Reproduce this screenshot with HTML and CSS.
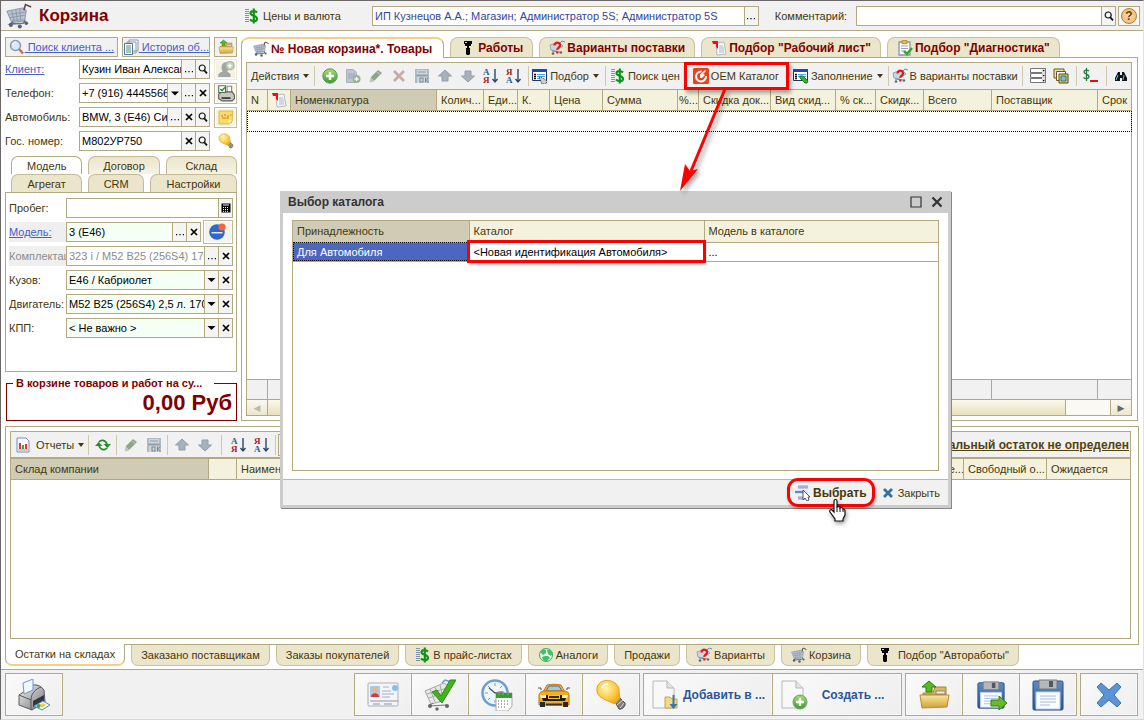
FILE: index.html
```html
<!DOCTYPE html>
<html lang="ru">
<head>
<meta charset="utf-8">
<title>Корзина</title>
<link rel="stylesheet" href="styles.css">
</head>
<body>
<svg class="sprite" aria-hidden="true">
<defs>
<linearGradient id="gGreen" x1="0" y1="0" x2="0" y2="1"><stop offset="0" stop-color="#a9dc7a"/><stop offset="1" stop-color="#3b9a2c"/></linearGradient>
<linearGradient id="gFolder" x1="0" y1="0" x2="0" y2="1"><stop offset="0" stop-color="#f8e6a0"/><stop offset="1" stop-color="#d0a136"/></linearGradient>
<linearGradient id="gBlue" x1="0" y1="0" x2="0" y2="1"><stop offset="0" stop-color="#5d8cc4"/><stop offset="1" stop-color="#2a5692"/></linearGradient>
<linearGradient id="gSteel" x1="0" y1="0" x2="1" y2="1"><stop offset="0" stop-color="#f4f4f4"/><stop offset="1" stop-color="#6d7075"/></linearGradient>
<radialGradient id="gBulb" cx=".4" cy=".35" r=".7"><stop offset="0" stop-color="#fff3b0"/><stop offset=".6" stop-color="#fccb45"/><stop offset="1" stop-color="#eda51e"/></radialGradient>
</defs>
<symbol id="cart" viewBox="0 0 32 32"><path d="M1 10l20-4 4 3-2 13-16 2z" fill="#b7c2ce" stroke="#7d8b9b"/><path d="M4 14l20-3M5 18l18-3M7 9l3 14M12 8l2 14M17 7l1 14M8 21h16" stroke="#8494a6" fill="none"/><path d="M22 9l2-7 7 3" stroke="#5e4a52" stroke-width="2" fill="none"/><path d="M9 23l-4 3 16-1 3-3" stroke="#667382" stroke-width="2" fill="none"/><circle cx="6" cy="27" r="2.500" fill="#59616c"/><circle cx="17" cy="29" r="2.500" fill="#59616c"/><circle cx="25" cy="25" r="2.200" fill="#59616c"/></symbol>
<symbol id="dollar" viewBox="0 0 16 16"><path d="M2 1v14M4 1v14" stroke="#5578a0" stroke-width="1.500" stroke-dasharray="1 1"/><path d="M13 4.500C11 2.500 6.500 2.500 6.500 5.300S13 7.500 13 10.700 8 13.500 6 11.500M9.800 .5v15" stroke="#0a9412" stroke-width="2.100" fill="none"/></symbol>
<symbol id="lens" viewBox="0 0 16 16"><path d="M10 10l4 4.500" stroke="#b87a4a" stroke-width="2.500"/><circle cx="6.500" cy="6.500" r="5" fill="#d8e8f8" stroke="#8c9bb4" stroke-width="1.500"/><path d="M4 6c0-2 1.500-3 3-3" stroke="#fff" fill="none"/></symbol>
<symbol id="docs" viewBox="0 0 16 16"><path d="M6 1h9v11H6zM4 3h9v11H4z" fill="#fff" stroke="#8797a8"/><path d="M1.500 4.500h8v11h-8z" fill="#fff" stroke="#4f76a3"/><path d="M3 7h5M3 9h5M3 11h5M3 13h5" stroke="#4d8b7f"/></symbol>
<symbol id="folderup" viewBox="0 0 32 32"><path d="M5 14h10l2-6h11v8H5z" fill="#dcb65a" stroke="#a98435"/><path d="M18 12h9v3h-9z" fill="#eee" stroke="#888"/><path d="M2 16h29l-2 12-25 1z" fill="url(#gFolder)" stroke="#b38c34"/><path d="M11 2l7 6h-4v5H8V8H4z" fill="#58b820" stroke="#2f7d10"/></symbol>
<symbol id="person" viewBox="0 0 16 16"><path d="M1 15c0-4 3-4 4-5-2-3-1-8 3-8 3 0 4 5 1 8 1 1 4 2 3 5z" fill="#a3a6a2"/><circle cx="11.500" cy="5" r="3.700" fill="#c3d0bb" stroke="#a5b19f"/><path d="M9.500 5h4M11.500 3v4" stroke="#fff" stroke-width="1.300"/></symbol>
<symbol id="print" viewBox="0 0 16 16"><path d="M9 2h4v6H9z" fill="#fff" stroke="#888"/><path d="M1.500 9l3-2h9l2 3v3l-2 2h-9l-3-2z" fill="#c9c7c1" stroke="#5e5d59"/><path d="M4 12.500h8" stroke="#333" stroke-width="1.500"/><path d="M1.500 1.500h6v6h-6z" fill="#fff" stroke="#5a705a"/><path d="M3 4.500l1.500 1.500 2.500-3" stroke="#1a8a2a" stroke-width="1.300" fill="none"/></symbol>
<symbol id="note" viewBox="0 0 16 16"><path d="M1 2h14l-1 11-3 2H1z" fill="#fbdc66" stroke="#e0b83e"/><path d="M11 15l3-4h-4z" fill="#fff0a0"/><path d="M3 7h2M6 6h2M9 7h2M12 6h1.500M4 9h7" stroke="#cf7d28" fill="none"/></symbol>
<symbol id="bulb" viewBox="0 0 32 32"><path d="M20 23l4-5 6 6c1 3-3 7-6 6z" fill="#777b80" stroke="#4b4d50"/><path d="M22 26l6-5M25 29l4-5" stroke="#ddd"/><path d="M2 9C3 3 10 0 16 2s9 7 8 11l1 6-5 6-7-3C5 19 1 15 2 9z" fill="url(#gBulb)" stroke="#e4a02b"/><path d="M7 9c1-3 3-4 6-4" stroke="#fff" stroke-width="2" fill="none"/></symbol>
<symbol id="mag" viewBox="0 0 10 10"><circle cx="4.200" cy="4" r="3" fill="none" stroke="#111" stroke-width="1.200"/><path d="M6.300 6.300L9 9.300" stroke="#111" stroke-width="1.800"/></symbol>
<symbol id="x" viewBox="0 0 10 10"><path d="M2 2l6 6M8 2L2 8" stroke="#000" stroke-width="1.700"/></symbol>
<symbol id="dots" viewBox="0 0 10 10"><path d="M1 7h1.200v1.200H1zM4.400 7h1.200v1.200H4.400zM7.800 7H9v1.200H7.800z"/></symbol>
<symbol id="tri" viewBox="0 0 10 10"><path d="M1 3.500h8L5 7.500z"/></symbol>
<symbol id="calc" viewBox="0 0 10 10"><path d="M.5.5h9v9h-9z"/><path d="M2 2h6" stroke="#fff"/><path d="M2 4.500h6M2 6.500h6M2 8.300h6" stroke="#fff" stroke-dasharray="1 1"/></symbol>
<symbol id="globe" viewBox="0 0 18 18"><circle cx="8" cy="9" r="7.800" fill="#2f68c9"/><path d="M2.500 9h11v1.500h-11z" fill="#dce7fa"/><circle cx="13" cy="4" r="3.600" fill="#fb6238"/></symbol>
<symbol id="worklist" viewBox="0 0 16 16"><path d="M5 3l8-1 2 12-9 1z" fill="#f5f6f9" stroke="#b5bac5"/><path d="M8 6h4M8 8h5M8 10h5M8 12h5" stroke="#b0b6c4"/><path d="M1 1h6v8L5 7V4H2z" fill="#e0141c"/></symbol>
<symbol id="tool" viewBox="0 0 16 16"><path d="M4 1h8v3h-1v2H9v2h1v6l-1 1H7l-1-1V8h1V6H5V4H4z"/><path d="M5 2.500h2" stroke="#fff" stroke-width=".8"/></symbol>
<symbol id="cartq" viewBox="0 0 16 16"><path d="M1 5l9-3 4 4-8 5-4-1z" fill="#cdd5de" stroke="#96a4b4"/><path d="M11 3l2-2 3 1M3 11l8 1" stroke="#6c8bb0" fill="none"/><circle cx="4" cy="13.500" r="1.300" fill="#666"/><circle cx="12" cy="12.500" r="1.200" fill="#666"/><path d="M5.500 5.500c0-4 6-3.500 5.500 .3-.4 2-2.700 1.800-2.700 4M8.300 11.500v2" stroke="#e3171b" stroke-width="2.200" fill="none"/></symbol>
<symbol id="clip" viewBox="0 0 16 16"><path d="M2 2h11v13H2z" fill="#fff" stroke="#8794a6" stroke-width="1.300"/><path d="M5 .7h5v3H5z" fill="#e5c563" stroke="#a98a35"/><path d="M4 6h7M4 8.500h7M4 11h3" stroke="#98a5b8"/><path d="M7 11l3 3 5-6" stroke="#38a52e" stroke-width="2.500" fill="none"/></symbol>
<symbol id="plus" viewBox="0 0 16 16"><circle cx="8" cy="8" r="7.200" fill="url(#gGreen)" stroke="#5a9948"/><path d="M4 8h8M8 4v8" stroke="#fff" stroke-width="2.400"/></symbol>
<symbol id="docplus" viewBox="0 0 16 16"><path d="M1.500 1.500h7l3 3v10h-10z" fill="#bcc6cf" stroke="#a6b1ba"/><path d="M3 6h7M3 8h7M3 10h4" stroke="#9aa7b2"/><circle cx="11.500" cy="11" r="4" fill="#94b58f"/><path d="M9.500 11h4M11.500 9v4" stroke="#fff" stroke-width="1.300"/></symbol>
<symbol id="pencil" viewBox="0 0 16 16"><path d="M2 14l1-5 7-7 4 3-8 8z" fill="#8fa58b"/><path d="M2 14l1-4 3 3zM9 4l4 3" fill="#b9c2b6" stroke="#c3cec0"/></symbol>
<symbol id="xgray" viewBox="0 0 16 16"><path d="M3 3l10 10M13 3L3 13" stroke="#c5aaa5" stroke-width="2.600"/></symbol>
<symbol id="saveok" viewBox="0 0 16 16"><path d="M1 1h14v14H1z" fill="#aebac4"/><path d="M3 2h10v4H3zM3 9h10v6H3z" fill="#cdd5db"/><path d="M4 4h8M2 7.500h12" stroke="#8f9eab"/><rect x="6" y="10" width="3" height="4" fill="none" stroke="#7b8995"/><path d="M11.500 9.500v5M14.500 9.500l-3 2.500 3 2.500" stroke="#7b8995" fill="none"/></symbol>
<symbol id="up" viewBox="0 0 16 16"><path d="M8 2l6.500 6H11v5H5V8H1.500z" fill="#a6b1ba" stroke="#919faa"/></symbol>
<symbol id="down" viewBox="0 0 16 16"><path d="M8 14L1.500 8H5V3h6v5h3.500z" fill="#a6b1ba" stroke="#919faa"/></symbol>
<symbol id="pick" viewBox="0 0 16 16"><path d="M.5 1.500h14v11H.5z" fill="#fff" stroke="#24335e"/><path d="M0 1h15v3H0z" fill="#2048b0"/><path d="M2 6.500h2M2 8.500h2M2 10.500h2" stroke="#111" stroke-width="1.300"/><path d="M5 6.500h8M5 8.500h8M5 10.500h5" stroke="#4fa3e0"/><path d="M7 9l4 1 4 3-1 3h-4z" fill="#ccc" stroke="#222" stroke-dasharray="1 1"/></symbol>
<symbol id="fill" viewBox="0 0 16 16"><path d="M.5 1.500h14v11H.5z" fill="#fff" stroke="#24335e"/><path d="M0 1h15v3H0z" fill="#2048b0"/><path d="M2 6.500h2M2 8.500h2M2 10.500h2" stroke="#111" stroke-width="1.300"/><path d="M5 6.500h8M5 8.500h8" stroke="#4fa3e0"/><path d="M7 8l3 0 5 5-1 2-2 0-5-5z" fill="#38b536" stroke="#1b7b1a"/></symbol>
<symbol id="oem" viewBox="0 0 16 16"><rect width="16" height="16" rx="1.500" fill="#e8431b"/><path d="M8.500 3.500A5 5 0 1 0 13 8" stroke="#fff" stroke-width="2" fill="none"/><path d="M7 10V6.500L12 2l1 1-3 3 2 1-3 3z" fill="#fff"/></symbol>
<symbol id="rows" viewBox="0 0 16 16"><path d="M.5.5h15v4H.5zM.5 5.500h15v4H.5zM.5 10.500h15v4H.5z" fill="#fff" stroke="#777"/><path d="M12 .5h3.500v14H12" fill="#ddd" stroke="#777"/><path d="M12.700 2h2l-1 1.500zM12.700 7h2l-1 1.500zM12.700 12h2l-1 1.500z"/></symbol>
<symbol id="layers" viewBox="0 0 16 16"><path d="M1 1h10v9H1z" fill="#efe1a1" stroke="#6b5720"/><path d="M3.500 3.500h9v9h-9z" fill="#fff" stroke="#6b5720"/><path d="M6 6h9v9H6z" fill="#edd166" stroke="#54451c"/><path d="M8 8h5v5H8z" fill="#7ac2d8" stroke="#376"/></symbol>
<symbol id="dolmin" viewBox="0 0 16 16"><path d="M6 3C4.500 1.500 1 1.700 1 4s5 2 5 4.500S2 11 .5 9.500M3.500 0v13" stroke="#207b3c" stroke-width="1.300" fill="none"/><path d="M7 13h8" stroke="#f00808" stroke-width="2"/></symbol>
<symbol id="binoc" viewBox="0 0 16 16"><path d="M5 4h2v3h2V4h2l3 6v3H9v-3H7v3H2v-3z" fill="#10151c"/><path d="M3 12l2-5M10 12l1-5" stroke="#3ecadd"/></symbol>
<symbol id="chart" viewBox="0 0 16 16"><path d="M2 1h9l3 3v11H2z" fill="#f4f8fc" stroke="#7592b2"/><path d="M5 6v6" stroke="#d83a2d" stroke-width="2"/><path d="M8 8v4" stroke="#40a23d" stroke-width="2"/><path d="M11 7v5" stroke="#d83a2d" stroke-width="2"/><path d="M3.500 13h9" stroke="#999"/></symbol>
<symbol id="refresh" viewBox="0 0 16 16"><path d="M4 5c2-2.500 6-2.500 8 2M12 11c-2 2.500-6 2.500-8-2" fill="none" stroke="#2c8a2c" stroke-width="1.800"/><path d="M8.500 7H16l-3.700 4zM7.500 9H0l3.700-4z" fill="#2c8a2c"/></symbol>
<symbol id="recycle" viewBox="0 0 16 16"><circle cx="8" cy="8" r="6.500" fill="#eaf8e9" stroke="#35ad57"/><path d="M2 5l3-3 3 1v3L5 8zM9 3l3-1 3 4-2 3-3-2zM4 10l3-1h3l2 2-4 4-3-2z" fill="#43bf67"/></symbol>
<symbol id="bigprinter" viewBox="0 0 32 32"><path d="M1 16L7 12c5-8 14-8 19-1l1 12-13 8L1 26z" fill="url(#gSteel)" stroke="#5b5c5f"/><path d="M5 4l10-4v11L6 15z" fill="#eef6ff" stroke="#6f98cc"/><path d="M1 16l12 5v10M13 21c0-7 5-11 10-13" fill="none" stroke="#55575b"/><path d="M15 22l11-6v6l-11 6z" fill="#33363b"/><path d="M16 27l9-5 7 4-8 5z" fill="#f5f9ff" stroke="#5c86c7"/><path d="M21 26l4-2 3 2-4 3z" fill="#ecd42a"/><circle cx="20.500" cy="27" r="2" fill="#2fa45d"/></symbol>
<symbol id="card" viewBox="0 0 32 26"><rect x="1" y="1" width="30" height="23" rx="1" fill="#f3f5f9" stroke="#a9b0b9"/><path d="M3 4h10v11H3z" fill="#a8cbea"/><circle cx="8" cy="8" r="2.800" fill="#e7b58f"/><path d="M4 15c0-5 8-5 8 0z" fill="#d43c35"/><path d="M16 5h6M15 9h9M15 12h12M15 15h8" stroke="#9db1cc"/><circle cx="28" cy="6" r="3" fill="#8ebbe9"/><path d="M3 19h28M6 22h7M17 22h8" stroke="#8d949f"/></symbol>
<symbol id="cartcheck" viewBox="0 0 32 32"><path d="M1 12l19-8 4 3-5 15-12 3z" fill="#e8e8e8" stroke="#a6a6a6"/><path d="M3 15l20-6M5 19l16-6M6 10l5 13M11 8l5 15M16 6l3 13" stroke="#aaa"/><path d="M18 4l3-3 6 2" stroke="#6699ce" stroke-width="1.500" fill="none"/><path d="M9 24l-4 3 17-1" stroke="#777" fill="none"/><circle cx="6" cy="27" r="2" fill="#666"/><circle cx="13" cy="30" r="1.700" fill="#666"/><circle cx="23" cy="27" r="2" fill="#666"/><path d="M8 13l5-2 4 6L26 1h6L18 24z" fill="#43b41e" stroke="#2b8f10"/></symbol>
<symbol id="clock" viewBox="0 0 32 32"><circle cx="14" cy="14" r="12.500" fill="#eef6fd" stroke="#6a9fd6" stroke-width="2.500"/><path d="M14 4v3M14 21v3M4 14h3M21 14h3M7 7l2 2M21 7l-2 2M7 21l2-2" stroke="#8296ad"/><path d="M8 9l6 5 8-1" stroke="#555" fill="none" stroke-width="1.300"/><path d="M15 14h16v13l-4 5H15z" fill="#fdfdfd" stroke="#aaa"/><path d="M15 14h16v5H15z" fill="#2aa523"/><path d="M18 12v4M22 12v4M27 12v4" stroke="#999"/><path d="M17 22h12M17 25h12M17 28h9" stroke="#666" stroke-dasharray="1 2"/></symbol>
<symbol id="car" viewBox="0 0 32 26"><path d="M5 10L9 3c4-1 10-1 14 0l4 7z" fill="#f8b132" stroke="#b77d24"/><path d="M8 9l3-5h10l3 5z" fill="#a8c7d7" stroke="#5c6d75"/><path d="M1 14c0-4 3-5 6-5h18c4 0 6 1 6 5v9H1z" fill="#f7aa22" stroke="#b77322"/><path d="M3 13h26l-2 6H5z" fill="#1e1c1c"/><path d="M2 13h6v3H3zM24 13h6l-1 3h-5z" fill="#fff2b5"/><path d="M10 13h12v4H10z" fill="#f7c22a"/><path d="M11 15h10" stroke="#333" stroke-width="2"/><path d="M2 20h5v5H2zM25 20h5v5h-5z" fill="#2a2929"/><path d="M8 22.500h16" stroke="#333" stroke-width="2"/><path d="M0 6h3v2M32 6h-3v2" stroke="#555" fill="none"/></symbol>
<symbol id="docdown" viewBox="0 0 28 30"><path d="M1 1h14l7 7v20H1z" fill="#f8f8f9" stroke="#b7b7bb"/><path d="M15 1v7h7" fill="#e4e4e6" stroke="#b7b7bb"/><path d="M13 17h5l2 2h5v9H13z" fill="#f2d88a" stroke="#c8a34a"/><path d="M20.500 15h2v9h3l-4 5-4-5h3z" fill="#3478ad"/></symbol>
<symbol id="docadd" viewBox="0 0 28 30"><path d="M1 1h14l7 7v20H1z" fill="#f8f8f9" stroke="#b7b7bb"/><path d="M15 1v7h7" fill="#e4e4e6" stroke="#b7b7bb"/><circle cx="19" cy="22" r="7" fill="url(#gGreen)" stroke="#6f9e65"/><path d="M15 22h8M19 18v8" stroke="#fff" stroke-width="2.400"/></symbol>
<symbol id="floppy" viewBox="0 0 32 32"><rect x="1" y="2" width="30" height="29" rx="1.500" fill="url(#gBlue)" stroke="#264c80"/><path d="M7 1h18v9H7z" fill="#b5b7ba" stroke="#77797e"/><path d="M17 2h4v6h-4z" fill="#53565b"/><path d="M4 13h24v17H4z" fill="#f8fbff" stroke="#bfd1e8"/><path d="M8 17h16M8 20h16M8 23h16M8 26h10" stroke="#a8c0df"/></symbol>
<symbol id="arrowr" viewBox="0 0 18 16"><path d="M1 5h8V1l8 7-8 7v-4H1z" fill="#69b928" stroke="#397b10"/></symbol>
<symbol id="xblue" viewBox="0 0 26 26"><path d="M5 1l8 7 8-7 4 4-7 8 7 8-4 4-8-7-8 7-4-4 7-8-7-8z" fill="#5b93d8" stroke="#3f73b4" stroke-linejoin="round"/></symbol>
<symbol id="choose" viewBox="0 0 16 16"><path d="M3 0h10v4H3zM3 11h8v4H3z" fill="#c6c6ec"/><path d="M3 2h10M3 13h8" stroke="#8e8ed0"/><path d="M0 5h13v4H0z" fill="#d4e5f6"/><path d="M0 7h9" stroke="#316ea6" stroke-width="1.500"/><path d="M8 5v10l2-2 2 3 2-1-1-3h2z" fill="#fff" stroke="#333" stroke-width=".8"/></symbol>
<symbol id="xteal" viewBox="0 0 12 12"><path d="M2 2l8 8M10 2l-8 8" stroke="#36719b" stroke-width="2.800"/></symbol>
<symbol id="hand" viewBox="0 0 18 24"><path d="M6 14V3c0-2 3-2 3 0v6c3-1 3 0 3 1 2-1 3 0 3 1 2 0 2 1 2 2v4l-2 4v2H7v-2l-5-7c-1-2 1-3 2-2z" fill="#fff" stroke="#111" stroke-width="1.200"/><path d="M9 9v5M12 10v4M15 11v3" stroke="#111"/></symbol>
<symbol id="max" viewBox="0 0 12 12"><path d="M1 1h10v10H1z" fill="none" stroke="#333" stroke-width="1.200"/></symbol>
<symbol id="close" viewBox="0 0 12 12"><path d="M1.500 1.500l9 9M10.500 1.500l-9 9" stroke="#333" stroke-width="2.200"/></symbol>
</svg>

<div class="app">
  <header class="titlebar">
    <svg class="i26"><use href="#cart"/></svg>
    <h1>Корзина</h1>
    <button class="flat prices"><svg class="i16"><use href="#dollar"/></svg>Цены и валюта</button>
    <div class="field company"><input type="text" aria-label="Организация" value="ИП Кузнецов А.А.; Магазин; Администратор 5S; Администратор 5S"><button aria-label="Выбрать"><svg><use href="#dots"/></svg></button></div>
    <label for="comment">Комментарий:</label>
    <div class="field comment"><input type="text" id="comment"><button aria-label="Открыть"><svg><use href="#mag"/></svg></button></div>
    <button class="help" aria-label="Справка"><span>?</span></button>
  </header>

  <main class="work">
    <aside class="side">
      <div class="find">
        <button class="box"><svg class="i16"><use href="#lens"/></svg><u>&nbsp;Поиск клиента ...</u></button>
        <button class="box"><svg class="i16"><use href="#docs"/></svg><u>&nbsp;История об...</u></button>
        <button class="box icon" aria-label="Папка"><svg class="i16"><use href="#folderup"/></svg></button>
      </div>
      <div class="client">
        <label for="f1"><a href="#">Клиент:</a></label>
        <div class="field"><input id="f1" type="text" value="Кузин Иван Александрович"><button aria-label="Выбрать"><svg><use href="#dots"/></svg></button><button aria-label="Открыть"><svg><use href="#mag"/></svg></button></div>
        <button class="tile off" aria-label="Новый клиент"><svg class="i18"><use href="#person"/></svg></button>
        <label for="f2">Телефон:</label>
        <div class="field"><input id="f2" type="text" value="+7 (916) 4445566"><button aria-label="Список"><svg><use href="#tri"/></svg></button><button aria-label="Выбрать"><svg><use href="#dots"/></svg></button><button aria-label="Очистить"><svg><use href="#x"/></svg></button></div>
        <button class="tile" aria-label="Печать"><svg class="i18"><use href="#print"/></svg></button>
        <label for="f3">Автомобиль:</label>
        <div class="field"><input id="f3" type="text" value="BMW, 3 (E46) Синий"><button aria-label="Выбрать"><svg><use href="#dots"/></svg></button><button aria-label="Очистить"><svg><use href="#x"/></svg></button><button aria-label="Открыть"><svg><use href="#mag"/></svg></button></div>
        <button class="tile" aria-label="Заметка"><svg class="i16"><use href="#note"/></svg></button>
        <label for="f4">Гос. номер:</label>
        <div class="field"><input id="f4" type="text" value="М802УР750"><button aria-label="Очистить"><svg><use href="#x"/></svg></button><button aria-label="Открыть"><svg><use href="#mag"/></svg></button></div>
        <button class="flat tip" aria-label="Подсказка"><svg class="i16"><use href="#bulb"/></svg></button>
      </div>
      <nav class="minitabs">
        <div><button class="on">Модель</button><button>Договор</button><button>Склад</button></div>
        <div><button>Агрегат</button><button class="short">CRM</button><button class="long">Настройки</button></div>
      </nav>
      <section class="model">
        <label for="m1">Пробег:</label>
        <div class="field"><input id="m1" type="text"><button aria-label="Калькулятор"><svg><use href="#calc"/></svg></button></div>
        <label for="m2" class="shade"><a href="#">Модель:</a></label>
        <div class="pair"><div class="field mint"><input id="m2" type="text" value="3 (E46)"><button aria-label="Выбрать"><svg><use href="#dots"/></svg></button><button aria-label="Очистить"><svg><use href="#x"/></svg></button></div><button class="tile wide" aria-label="Каталог"><svg class="i18"><use href="#globe"/></svg></button></div>
        <label for="m3" class="shade dim">Комплектация:</label>
        <div class="field dim"><input id="m3" type="text" value="323 i / M52 B25 (256S4) 170 л.с."><button aria-label="Выбрать"><svg><use href="#dots"/></svg></button><button aria-label="Очистить"><svg><use href="#x"/></svg></button></div>
        <label for="m4">Кузов:</label>
        <div class="field mint"><select id="m4"><option>E46 / Кабриолет</option></select><button aria-label="Очистить"><svg><use href="#x"/></svg></button></div>
        <label for="m5">Двигатель:</label>
        <div class="field mint"><select id="m5"><option>M52 B25 (256S4) 2,5 л. 170 л.с.</option></select><button aria-label="Очистить"><svg><use href="#x"/></svg></button></div>
        <label for="m6">КПП:</label>
        <div class="field mint"><select id="m6"><option>&lt; Не важно &gt;</option></select><button aria-label="Очистить"><svg><use href="#x"/></svg></button></div>
      </section>
      <fieldset class="total"><legend>В корзине товаров и работ на су...</legend><output>0,00 Руб</output></fieldset>
    </aside>

    <section class="right">
      <nav class="tabs">
        <button class="on"><svg class="i16"><use href="#cart"/></svg>№ Новая корзина*. Товары</button>
        <button><svg class="i16"><use href="#tool"/></svg>Работы</button>
        <button><svg class="i16"><use href="#cartq"/></svg>Варианты поставки</button>
        <button><svg class="i16"><use href="#worklist"/></svg>Подбор "Рабочий лист"</button>
        <button><svg class="i16"><use href="#clip"/></svg>Подбор "Диагностика"</button>
      </nav>
      <div class="frame">
        <div class="toolbar">
          <button>Действия<i class="caret"></i></button><hr>
          <button class="ic" aria-label="Добавить"><svg class="i16"><use href="#plus"/></svg></button>
          <button class="ic" aria-label="Копировать"><svg class="i16"><use href="#docplus"/></svg></button>
          <button class="ic" aria-label="Изменить"><svg class="i16"><use href="#pencil"/></svg></button>
          <button class="ic" aria-label="Удалить"><svg class="i16"><use href="#xgray"/></svg></button>
          <button class="ic" aria-label="Записать"><svg class="i16"><use href="#saveok"/></svg></button>
          <button class="ic" aria-label="Вверх"><svg class="i16"><use href="#up"/></svg></button>
          <button class="ic" aria-label="Вниз"><svg class="i16"><use href="#down"/></svg></button>
          <button class="ic" aria-label="По возрастанию"><svg class="i16 sort" viewBox="0 0 16 16"><text x="0" y="7" class="blue">А</text><text x="0" y="15" class="red">Я</text><path d="M12 1v12M9.500 11l2.500 3 2.500-3"/></svg></button>
          <button class="ic" aria-label="По убыванию"><svg class="i16 sort" viewBox="0 0 16 16"><text x="0" y="7" class="red">Я</text><text x="0" y="15" class="blue">А</text><path d="M12 1v12M9.500 11l2.500 3 2.500-3"/></svg></button><hr>
          <button><svg class="i16"><use href="#pick"/></svg>Подбор<i class="caret"></i></button><hr class="w">
          <button><svg class="i16"><use href="#dollar"/></svg>Поиск цен</button>
          <button class="marked"><svg class="i16"><use href="#oem"/></svg>OEM Каталог</button>
          <button><svg class="i16"><use href="#fill"/></svg>Заполнение<i class="caret"></i></button><hr>
          <button><svg class="i16"><use href="#cartq"/></svg>В варианты поставки</button><hr class="w">
          <button class="ic" aria-label="Строки"><svg class="i16"><use href="#rows"/></svg></button>
          <button class="ic" aria-label="Слои"><svg class="i16"><use href="#layers"/></svg></button><hr>
          <button class="ic" aria-label="Скидка"><svg class="i16"><use href="#dolmin"/></svg></button><hr>
          <button class="ic" aria-label="Найти"><svg class="i16"><use href="#binoc"/></svg></button>
        </div>
        <div class="grid">
          <table class="goods">
            <colgroup><col class="c21"><col class="c23"><col><col class="c47"><col class="c34"><col class="c32"><col class="c53"><col class="c75"><col class="c21"><col class="c72"><col class="c65"><col class="c40"><col class="c48"><col class="c68"><col class="c106"><col class="c34"></colgroup>
            <thead><tr><th>N</th><th><svg class="i16"><use href="#worklist"/></svg></th><th class="on">Номенклатура</th><th>Колич...</th><th>Еди...</th><th>К.</th><th>Цена</th><th>Сумма</th><th class="tight">%...</th><th>Скидка док...</th><th>Вид скид...</th><th>% ск...</th><th>Скидк...</th><th>Всего</th><th>Поставщик</th><th>Срок</th></tr></thead>
            <tbody><tr class="cur"><td colspan="16"></td></tr><tr><td colspan="16"></td></tr></tbody>
            <tfoot><tr><td></td><td></td><td></td><td></td><td></td><td></td><td></td><td></td><td></td><td></td><td></td><td></td><td></td><td></td><td></td><td></td></tr></tfoot>
          </table>
        </div>
        <div class="scroll"><button aria-label="Влево">◀</button><span class="thumb"></span><span class="track"></span><button class="r" aria-label="Вправо">▶</button></div>
      </div>
    </section>
  </main>

  <section class="lower">
    <div class="frame">
      <div class="toolbar">
        <button><svg class="i16"><use href="#chart"/></svg>&nbsp;Отчеты<i class="caret"></i></button><hr>
        <button class="ic" aria-label="Обновить"><svg class="i16"><use href="#refresh"/></svg></button><hr>
        <button class="ic" aria-label="Изменить"><svg class="i16"><use href="#pencil"/></svg></button>
        <button class="ic" aria-label="Записать"><svg class="i16"><use href="#saveok"/></svg></button><hr>
        <button class="ic" aria-label="Вверх"><svg class="i16"><use href="#up"/></svg></button>
        <button class="ic" aria-label="Вниз"><svg class="i16"><use href="#down"/></svg></button><hr class="w">
        <button class="ic" aria-label="По возрастанию"><svg class="i16 sort" viewBox="0 0 16 16"><text x="0" y="7" class="blue">А</text><text x="0" y="15" class="red">Я</text><path d="M12 1v12M9.500 11l2.500 3 2.500-3"/></svg></button>
        <button class="ic" aria-label="По убыванию"><svg class="i16 sort" viewBox="0 0 16 16"><text x="0" y="7" class="red">Я</text><text x="0" y="15" class="blue">А</text><path d="M12 1v12M9.500 11l2.500 3 2.500-3"/></svg></button><hr>
        <button class="ic framed" aria-label="Отбор"><svg class="i16"><use href="#rows"/></svg></button>
        <a href="#" class="rest">Минимальный остаток не определен</a>
      </div>
      <table class="stock">
        <colgroup><col class="c198"><col class="c28"><col><col class="c34"><col class="c83"><col class="c84"></colgroup>
        <thead><tr><th class="on">Склад компании</th><th></th><th>Наименование</th><th class="tight">Резе...</th><th>Свободный о...</th><th>Ожидается</th></tr></thead>
        <tbody></tbody>
      </table>
    </div>
    <nav class="btabs">
      <button class="on">Остатки на складах</button>
      <button>Заказано поставщикам</button>
      <button>Заказы покупателей</button>
      <button><svg class="i16"><use href="#dollar"/></svg>В прайс-листах</button>
      <button><svg class="i16"><use href="#recycle"/></svg>Аналоги</button>
      <button>Продажи</button>
      <button><svg class="i16"><use href="#cartq"/></svg>Варианты</button>
      <button><svg class="i16"><use href="#cart"/></svg>Корзина</button>
      <button><svg class="i16"><use href="#tool"/></svg>&nbsp;Подбор "Автоработы"</button>
    </nav>
  </section>

  <footer class="actions">
    <div class="group"><button aria-label="Печать"><svg class="i32"><use href="#bigprinter"/></svg></button></div>
    <div class="group push">
      <button aria-label="Карточка"><svg class="i32"><use href="#card"/></svg></button>
      <button aria-label="Оформить"><svg class="i32"><use href="#cartcheck"/></svg></button>
      <button aria-label="Запись"><svg class="i32"><use href="#clock"/></svg></button>
      <button aria-label="Автомобиль"><svg class="i32"><use href="#car"/></svg></button>
      <button aria-label="Подсказка"><svg class="i32"><use href="#bulb"/></svg></button>
    </div>
    <div class="group words">
      <button><svg class="i28"><use href="#docdown"/></svg><b>Добавить в ...</b></button>
      <button><svg class="i28"><use href="#docadd"/></svg><b>Создать ...</b></button>
    </div>
    <div class="group">
      <button aria-label="Открыть"><svg class="i32"><use href="#folderup"/></svg></button>
      <button class="go" aria-label="Записать и закрыть"><svg class="i28"><use href="#floppy"/></svg><svg class="arr"><use href="#arrowr"/></svg></button>
      <button aria-label="Записать"><svg class="i32"><use href="#floppy"/></svg></button>
    </div>
    <div class="group"><button aria-label="Закрыть"><svg class="i26"><use href="#xblue"/></svg></button></div>
  </footer>

  <div class="dialog" role="dialog" aria-labelledby="dlg">
    <div class="cap"><h2 id="dlg">Выбор каталога</h2><button aria-label="Развернуть"><svg><use href="#max"/></svg></button><button aria-label="Закрыть окно"><svg><use href="#close"/></svg></button></div>
    <div class="body">
      <table class="cat">
        <colgroup><col class="c176"><col class="c235"><col></colgroup>
        <thead><tr><th class="on">Принадлежность</th><th>Каталог</th><th>Модель в каталоге</th></tr></thead>
        <tbody><tr><td class="sel">Для Автомобиля</td><td class="hot">&lt;Новая идентификация Автомобиля&gt;</td><td>...</td></tr></tbody>
      </table>
    </div>
    <div class="foot">
      <button class="choose"><svg class="i16"><use href="#choose"/></svg><b>Выбрать</b></button>
      <button class="cancel"><svg class="i12"><use href="#xteal"/></svg>Закрыть</button>
      <svg class="hand"><use href="#hand"/></svg>
    </div>
  </div>

  <svg class="pointer" viewBox="0 0 50 106"><path d="M46 0L12 82" stroke="#f00" stroke-width="3"/><path d="M1 102L6 75l5 7 8-2z" fill="#f00"/></svg>
</div>
</body>
</html>
```
FILE: styles.css
```css
* { box-sizing: border-box; }
:root {
  --line: #b3a980;
  --ink: #45380c;
  --wine: #800000;
  --panel: #f1f1f1;
  --head: #f4f1dc;
  --headon: #cfcbb4;
  --tab: #ebe5cc;
  --link: #4560c8;
}
body { margin: 0; background: #fff; color: var(--ink); font: 11px/14px "Liberation Sans", Arial, sans-serif; }
button, input, select { font: inherit; color: inherit; margin: 0; padding: 0; border: 0; background: none; border-radius: 0; }
button { display: inline-flex; align-items: center; justify-content: center; white-space: nowrap; }
input, select { outline: 0; min-width: 0; }
a { color: inherit; }
h1, h2 { margin: 0; }
svg { display: block; flex: none; }
.sprite { position: absolute; width: 0; height: 0; }
.sort { font: bold 9px "Liberation Serif", serif; overflow: visible; }
.sort path { stroke: #27496d; stroke-width: 1.4; fill: none; }
.blue { fill: #27608f; }
.red { fill: #a81e25; }
.i12 { width: 12px; height: 12px; }
.i16 { width: 16px; height: 16px; }
.i18 { width: 18px; height: 18px; }
.i26 { width: 26px; height: 26px; }
.i28 { width: 28px; height: 30px; }
.i32 { width: 32px; height: 32px; }

.app { position: relative; display: flex; flex-direction: column; min-height: 100vh; border: 1px solid #6b6769; border-right-color: #e2e2e2; border-bottom-color: #d8d8d8; }

.titlebar { display: flex; align-items: center; height: 30px; padding: 0 3px 0 5px; background: var(--panel); border-bottom: 1px solid var(--line); }
.titlebar h1 { width: 212px; padding-left: 7px; font-size: 17px; line-height: 20px; color: var(--wine); }
.titlebar .prices { gap: 3px; width: 100px; justify-content: flex-start; }
.titlebar label { padding: 0 9px 0 16px; }
.company { flex: 388 1 0; margin-left: 28px; }
.comment { flex: 260 1 0; }
.help { width: 22px; height: 20px; margin-left: 2px; border: 1px solid var(--line); background: #f7f7f4; }
.help span { width: 16px; height: 16px; border: 1px solid #b47a3c; border-radius: 8px; background: radial-gradient(#ffe0ae, #f0b163); color: #6b3d12; font: bold 12px/14px "Liberation Sans", sans-serif; }

.field { display: flex; height: 20px; min-width: 0; border: 1px solid var(--line); background: #fff; color: #000; }
.titlebar .company { color: #34459a; }
.field input, .field select { flex: 1 1 0; width: 0; padding-left: 2px; text-overflow: clip; }
.field button { width: 14px; border-left: 1px solid var(--line); background: #f4f4f2; }
.field button svg { width: 10px; height: 10px; }
.field select { appearance: none; padding-right: 14px; overflow: hidden; background: url("data:image/svg+xml,%3Csvg xmlns='http://www.w3.org/2000/svg' width='14' height='18'%3E%3Cpath fill='%23f4f4f2' d='M0 0h14v18H0z'/%3E%3Cpath fill='%23b3a980' d='M0 0h1v18H0z'/%3E%3Cpath d='M3.500 7h8l-4 4z'/%3E%3C/svg%3E") right center no-repeat; }
.field.mint { background: #f5fff5; }
.field.dim, label.dim { color: #8c8c8c; }

.work { flex: 384 1 0; display: flex; gap: 4px; padding: 6px 5px 0 4px; }
.side { flex: none; width: 232px; display: flex; flex-direction: column; }
.find { display: flex; gap: 4px; height: 20px; margin-bottom: 2px; }
.box { flex: 113 1 0; border: 1px solid var(--line); background: var(--panel); color: var(--link); overflow: hidden; }
.box + .box { flex-grow: 88; }
.find .box.icon { flex: none; width: 23px; }
.client { display: grid; grid-template-columns: 74px 1fr 23px; grid-auto-rows: 20px; row-gap: 4px; align-items: center; }
.client .field { margin-right: 4px; }
.side label a { color: var(--link); }
.tile { width: 23px; height: 21px; border: 1px solid #c3ba97; background: #f4f3ee; box-shadow: inset 0 0 0 1px #fff; }
.tile.off { border-color: #eee9d3; background: #f5f2e4; }
.tile.wide { width: 30px; height: 24px; }
.minitabs { margin-top: 5px; padding-left: 6px; }
.minitabs div { display: flex; gap: 6px; height: 18px; }
.minitabs button { flex: 71 1 0; height: 18px; border: 1px solid #c3ba97; border-bottom: 0; border-radius: 7px 7px 0 0; background: linear-gradient(var(--tab), #f6f3e4); }
.minitabs div + div button { background: var(--tab); }
.minitabs .on { background: #fff; border-color: var(--line); }
.minitabs .short { flex-grow: 55; }
.minitabs .long { flex-grow: 87; }
.model { flex: 1 0 155px; display: grid; grid-template-columns: 57px 1fr; grid-auto-rows: 20px; row-gap: 4px; align-content: start; align-items: center; border: 1px solid var(--line); padding: 5px 3px 0 3px; }
.model label { height: 20px; line-height: 20px; overflow: hidden; white-space: nowrap; }
.model .shade { background: #efefef; }
.pair { display: flex; align-items: center; gap: 2px; height: 20px; }
.pair .field { flex: 1; }
.total { margin: 4px 0 0 1px; padding: 0 4px 0; min-width: 0; height: 45px; border: 1px solid var(--wine); color: var(--wine); text-align: right; }
.total legend { margin-left: 2px; padding: 0 12px 0 3px; font-weight: bold; text-align: left; white-space: nowrap; }
.total output { display: block; font: bold 22px/26px "Liberation Sans", sans-serif; white-space: nowrap; }

.right { flex: 1; min-width: 0; display: flex; flex-direction: column; }
.tabs { display: flex; gap: 6px; height: 20px; position: relative; z-index: 1; }
.tabs button { gap: 2px; border: 1px solid #c9c19e; border-bottom: 0; border-radius: 8px 8px 0 0; background: var(--tab); color: var(--wine); font-weight: bold; font-size: 12px; padding: 0 9px; }
.tabs .on { height: 21px; background: #fff; border-color: var(--line); border-top: 2px solid #f5cf87; padding: 0 11px; }
.frame { flex: 1; display: flex; flex-direction: column; border: 1px solid var(--line); padding: 4px; }
.right .frame { padding-right: 5px; }
.toolbar { display: flex; align-items: center; height: 27px; border: 1px solid var(--line); border-bottom: 0; background: var(--panel); padding: 0 4px; }
.toolbar button { gap: 2px; height: 22px; flex: none; }
.toolbar .ic { width: 23px; }
.toolbar hr { width: 1px; height: 20px; margin: 0 3px; border: 0; background: #d0c9aa; flex: none; }
.toolbar hr.w { margin: 0 4px; }
.caret { border: 3px solid transparent; border-top: 4px solid #45380c; border-bottom: 0; margin: 0 2px; }
.toolbar .marked { position: relative; height: 28px; margin: 0 4px; border: 3px solid #f00; box-shadow: 2px 3px 4px #0005; padding: 0 7px 0 6px; }
.grid { flex: 1; min-height: 0; }
table { border-collapse: collapse; table-layout: fixed; width: 100%; }
th { height: 21px; padding: 0 0 0 4px; border: 1px solid var(--line); background: var(--head); font-weight: normal; text-align: left; white-space: nowrap; overflow: hidden; }
th.on { background: var(--headon); }
th.tight { padding-left: 1px; }
td { padding: 0; }
.goods { height: 100%; border: 1px solid var(--line); border-bottom: 0; }
.goods .cur td { height: 21px; outline: 1px dotted #000; outline-offset: -1px; }
.goods thead th:nth-child(2) { padding-left: 3px; }
.goods tfoot td { height: 20px; border: 1px solid var(--line); background: var(--panel); }
.c21 { width: 21px; } .c23 { width: 23px; } .c28 { width: 28px; } .c32 { width: 32px; } .c34 { width: 34px; }
.c40 { width: 40px; } .c47 { width: 47px; } .c48 { width: 48px; } .c53 { width: 53px; } .c65 { width: 65px; }
.c68 { width: 68px; } .c72 { width: 72px; } .c75 { width: 75px; } .c83 { width: 83px; } .c84 { width: 84px; }
.c106 { width: 106px; } .c176 { width: 176px; } .c198 { width: 198px; } .c235 { width: 235px; }
.scroll { display: flex; height: 16px; border: 1px solid var(--line); border-top: 0; background: #faf9f3; }
.scroll button { width: 21px; background: linear-gradient(#fbf9ef, #ece6cd); color: #bdb9ab; font: 9px/14px "DejaVu Sans", sans-serif; border-right: 1px solid var(--line); }
.scroll .r { border: 0; border-left: 1px solid var(--line); color: #666; }
.thumb { flex: 798 1 0; background: linear-gradient(#fbf8e8, #e7dfbd); border-right: 1px solid var(--line); }
.track { flex: 44 1 0; }

.lower { flex: 240 1 0; display: flex; flex-direction: column; padding: 5px 4px 3px 4px; }
.lower .frame { padding: 4px 7px 5px 4px; }
.lower .toolbar { height: 26px; padding-right: 1px; }
.lower .toolbar hr { margin: 0 2px; }
.lower .toolbar hr.w { margin: 0 5px; }
.toolbar .framed { border: 1px solid var(--line); }
.rest { margin-left: auto; color: #54420a; font-weight: bold; font-size: 12px; white-space: nowrap; }
.stock { border: 1px solid var(--line); border-top-width: 2px; }
.lower .frame::after { content: ""; flex: 1; border: 1px solid var(--line); border-top: 0; }
.btabs { display: flex; gap: 6px; height: 21px; }
.btabs button { gap: 2px; padding: 0 9px; border: 1px solid #c9c19e; border-top: 0; border-radius: 0 0 7px 7px; background: var(--tab); }
.btabs .on { position: relative; height: 22px; margin-top: -1px; background: #fff; border-color: var(--line); border-bottom: 2px solid #f5cf87; }

.actions { display: flex; gap: 3px; align-items: flex-start; height: 50px; padding: 3px 5px 0 4px; border-top: 1px solid var(--line); background: var(--panel); }
.group { display: flex; }
.group.push { margin-left: auto; }
.group button { width: 58px; height: 43px; margin-left: -1px; border: 1px solid var(--line); background: linear-gradient(135deg, #fafafa, #eee); box-shadow: inset 0 0 0 1px #f8f8f8; }
.group button:first-child { margin-left: 0; }
.words button { width: 130px; padding: 0 4px 0 8px; justify-content: flex-start; }
.words b { flex: 1; font-size: 12px; color: #2b559b; text-align: center; }
.go { position: relative; }
.arr { position: absolute; right: 11px; bottom: 4px; width: 18px; height: 16px; }

.dialog { position: absolute; left: 279px; top: 190px; width: 671px; height: 317px; display: flex; flex-direction: column; border: solid #ccc; border-width: 0 3px 3px; background: #fff; box-shadow: 1px 1px 0 #888; }
.cap { display: flex; align-items: center; height: 22px; padding: 0 1px 0 5px; background: #ccc; color: #333; }
.cap h2 { flex: 1; font-size: 12px; }
.cap button { width: 21px; height: 20px; }
.cap svg { width: 12px; height: 12px; }
.body { flex: 1; margin: 7px 9px 8px; border: 1px solid var(--line); }
.cat th { height: 21px; border-width: 0 0 1px 1px; }
.cat th:first-child, .cat td:first-child { border-left: 0; }
.cat td { height: 19px; padding-left: 4px; border: 1px solid var(--line); border-width: 0 0 1px 1px; color: #000; white-space: nowrap; }
.cat .sel { background: #4c67c2; color: #fff; outline: 1px dotted #000; outline-offset: -1px; }
.cat .hot { outline: 3px solid #f00; outline-offset: -1px; box-shadow: 1px 3px 4px #0005; }
.foot { position: relative; display: flex; align-items: center; justify-content: flex-end; gap: 7px; height: 26px; border-top: 1px solid #c2b98f; background: var(--panel); padding-right: 8px; }
.choose { height: 29px; padding: 0 5px; gap: 2px; border: 3px solid #f00; border-radius: 11px; box-shadow: 1px 2px 3px #0004; }
.choose b { font-size: 12px; }
.cancel { gap: 4px; }
.hand { position: absolute; right: 102px; top: 18px; width: 18px; height: 24px; filter: drop-shadow(1px 2px 2px #0006); }
.pointer { position: absolute; left: 678px; top: 88px; width: 50px; height: 106px; filter: drop-shadow(3px 3px 2px #0005); pointer-events: none; }
```
